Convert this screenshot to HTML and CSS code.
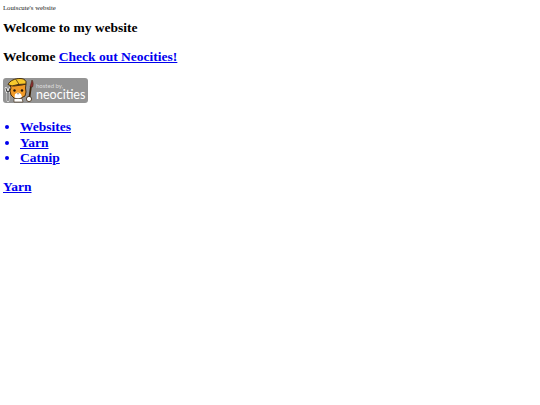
FILE: index.html
```html
<!DOCTYPE html>
<html lang="en">
<head>
<meta charset="utf-8">
<title>Louiscute's website</title>
<link rel="stylesheet" href="styles.css">
</head>
<body>
<p class="tagline">Louiscute's website</p>
<h2 class="heading">Welcome to my website</h2>
<h2 class="heading second">Welcome <a href="#">Check out Neocities!</a></h2>
<a class="badge" href="#" aria-label="hosted by neocities">
<svg class="cat" width="32" height="25" viewBox="0 0 32 25">
<!-- wrench -->
<path d="M3 10.500l1 3 2 0 1-3M5 13.500v9" fill="none" stroke="#fff" stroke-width="2.600" stroke-linecap="round"/>
<path d="M3 10.500l1 3 2 0 1-3M5 13.500v9" fill="none" stroke="#444" stroke-width="1.200" stroke-linecap="round"/>
<!-- ears and face -->
<path d="M8 10l-1-3 4 1 8-1 4-1-0.500 4 0.500 4-1 4-5 2.500-6-0.500-3-3-1-4z" fill="#f09a28" stroke="#3a2208" stroke-width=".9"/>
<!-- hard hat -->
<path d="M5 6.500c2-4 7-6 12-6 3 0 5 1 6 3l0 2.500-8 .5-6 1.500z" fill="#f7c92e" stroke="#3a2208" stroke-width=".9"/>
<path d="M13 1.500l3 4.800" stroke="#3a2208" stroke-width=".7"/>
<!-- muzzle and eyes -->
<path d="M12 16l3-1.500 3 1.500 1 3-4 2-3.500-1.500z" fill="#fff"/>
<circle cx="11.500" cy="12.500" r="1.200" fill="#1d1208"/>
<circle cx="19" cy="12.500" r="1.200" fill="#1d1208"/>
<path d="M14 15.500h2l-1 1z" fill="#1d1208"/>
<!-- body -->
<path d="M11 20.500h8l1 3.500h-9z" fill="#fff" stroke="#3a2208" stroke-width=".6"/>
<!-- brush and paw -->
<path d="M28 8l-1.500 11" stroke="#3a2208" stroke-width="1.800"/>
<path d="M27 9l2-7c1.500 2 1.500 5 .5 7z" fill="#8c2f33" stroke="#3a2208" stroke-width=".5"/>
<circle cx="26" cy="21" r="2.600" fill="#fff" stroke="#3a2208" stroke-width=".8"/>
</svg>
<span class="badge-text"><span class="hosted">hosted by,</span><span class="neo">neocities</span></span>
</a>
<ul class="links">
<li><a href="#">Websites</a></li>
<li><a href="#">Yarn</a></li>
<li><a href="#">Catnip</a></li>
</ul>
<p class="last"><a href="#">Yarn</a></p>
</body>
</html>
```
FILE: styles.css
```css
html, body { background: #fff; }
body {
  margin: 3px;
  font-family: "Liberation Serif", "Times New Roman", serif;
  color: #000;
}
a { color: #0000ee; }
.tagline { margin: 0; padding-top: 1px; font-size: 6.750px; line-height: 7px; color: #222; }
.heading { margin: 8px 0 0; font-size: 13.500px; line-height: 17px; font-weight: bold; }
.second { margin-top: 12px; }
.badge {
  display: flex;
  align-items: center;
  width: 85px;
  height: 25px;
  margin-top: 13px;
  background: #949494;
  border-radius: 3px;
  text-decoration: none;
}
.cat { flex: none; }
.badge-text { display: flex; flex-direction: column; font-family: Lato, sans-serif; margin: 0 0 0 1px; }
.hosted { font-size: 6px; line-height: 7px; color: #ddd; }
.neo { font-size: 12.500px; line-height: 11px; color: #fff; font-weight: 400; }
.links { margin: 16px 0 0; padding-left: 17px; font-size: 13.500px; line-height: 15.500px; font-weight: bold; color: #0000ee; }
.last { margin: 12px 0 0; font-size: 13.500px; line-height: 17px; font-weight: bold; }
```
